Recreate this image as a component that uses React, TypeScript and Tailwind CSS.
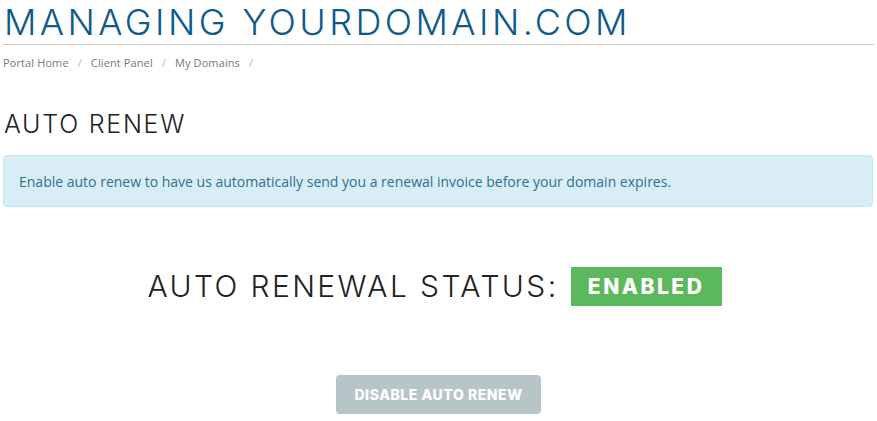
import React from 'react';

const crumbs = ['Portal Home', 'Client Panel', 'My Domains'];

const App = () => {
  return (
    <div className="min-h-screen bg-white px-[3px] pt-[2px] font-['Open_Sans',sans-serif]">
      {/* page title */}
      <h1 className="font-['Inter',sans-serif] text-[36px] leading-[40px] font-light tracking-[0.095em] text-[#0e5a8a] pl-[1px] pb-[2px] border-b border-[#cccccc]">
        MANAGING YOURDOMAIN.COM
      </h1>

      {/* breadcrumb */}
      <div className="flex items-center text-[11px] text-[#777] mt-[10px] h-[16px] tracking-[0.01em]">
        {crumbs.map((c) => (
          <React.Fragment key={c}>
            <span>{c}</span>
            <span className="px-[9px] text-[#bbb]">/</span>
          </React.Fragment>
        ))}
      </div>

      <h2 className="font-['Inter',sans-serif] text-[25px] leading-[30px] font-light tracking-[0.07em] text-[#222] mt-[38px] pl-[1px]">
        AUTO RENEW
      </h2>

      {/* info alert */}
      <div className="mt-[16px] mr-[1px] h-[52px] flex items-center rounded-[4px] border border-[#bce8f1] bg-[#d9edf7] px-[15px] text-[14px] text-[#31708f]">
        Enable auto renew to have us automatically send you a renewal invoice before your domain expires.
      </div>

      {/* status */}
      <div className="mt-[57px] flex items-center justify-center gap-[12px] pr-[8px]">
        <span className="font-['Inter',sans-serif] text-[30px] font-light tracking-[0.08em] text-[#222]">
          AUTO RENEWAL STATUS:
        </span>
        <span className="font-['Inter',sans-serif] bg-[#5cb85c] text-white text-[21px] font-extrabold tracking-[0.12em] h-[39px] w-[151px] flex items-center justify-center">
          ENABLED
        </span>
      </div>

      {/* action */}
      <div className="mt-[66px] flex justify-center">
        <button className="font-['Inter',sans-serif] h-[39px] w-[205px] rounded-[4px] bg-[#b6c5c8] text-white text-[14px] font-extrabold tracking-[0.04em]">
          DISABLE AUTO RENEW
        </button>
      </div>
    </div>
  );
};

export default App;
